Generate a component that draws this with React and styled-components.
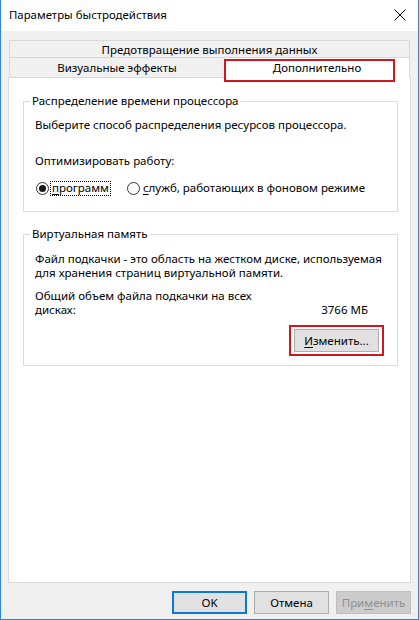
import React from "react";
import styled, { createGlobalStyle } from "styled-components";

const GlobalStyle = createGlobalStyle`
  html, body { margin: 0; padding: 0; background: #ffffff; }
  body { font-family: "Noto Sans", "Liberation Sans", sans-serif; font-size: 11.5px; color: #000; }
  * { box-sizing: border-box; }
`;

const Window = styled.div`
  width: 419px;
  height: 620px;
  display: flex;
  flex-direction: column;
  border: 1px solid #2b86d8;
  border-top: none;
  background: #f0f0f0;
`;

const TitleBar = styled.div`
  height: 31px;
  flex: none;
  background: #ffffff;
  display: flex;
  align-items: center;
  justify-content: space-between;
  padding: 0 12px 1px 8px;
`;

const Title = styled.span`
  font-size: 11.4px;
  line-height: 14px;
`;

const Client = styled.div`
  flex: 1;
  display: flex;
  flex-direction: column;
  padding: 9px 7px 0 7px;
  min-height: 0;
`;

const Tabs = styled.div`
  display: flex;
  flex-direction: column;
  padding: 0 1px;
  flex: none;
`;

const TabRow = styled.div`
  display: flex;
  height: ${(p) => p.$h}px;
`;

const Tab = styled.div`
  position: relative;
  flex: ${(p) => (p.$grow ? 1 : "none")};
  width: ${(p) => (p.$w ? `${p.$w}px` : "auto")};
  display: flex;
  justify-content: center;
  align-items: ${(p) => (p.$active ? "flex-start" : "center")};
  padding-top: ${(p) => (p.$active ? "3px" : "1px")};
  border: 1px solid #d9d9d9;
  border-bottom: none;
  border-right: ${(p) => (p.$noRight ? "none" : "1px solid #d9d9d9")};
  background: ${(p) => (p.$active ? "#ffffff" : "#f0f0f0")};
  margin-bottom: ${(p) => (p.$active ? "-1px" : "0")};
  z-index: ${(p) => (p.$active ? 1 : 0)};
  line-height: 14px;
  white-space: nowrap;
`;

const TabMark = styled.span`
  position: absolute;
  left: -1px;
  top: 1px;
  width: 171px;
  height: 23px;
  border: 2px solid #d2161e;
  pointer-events: none;
`;

const Panel = styled.div`
  flex: 1;
  background: #ffffff;
  border: 1px solid #d9d9d9;
  padding: 16px 12px 0 14px;
  display: flex;
  flex-direction: column;
  gap: 15px;
`;

const Group = styled.fieldset`
  margin: 0;
  min-width: 0;
  border: 1px solid #dcdcdc;
  padding: 0 11px ${(p) => p.$pb}px 11px;
  display: flex;
  flex-direction: column;
`;

const Legend = styled.legend`
  padding: 0 2px;
  margin-left: -5px;
  line-height: 14px;
`;

const Text = styled.div`
  line-height: 14px;
  white-space: nowrap;
  margin-top: ${(p) => p.$mt || 0}px;
`;

const RadioRow = styled.div`
  display: flex;
  align-items: center;
  margin-top: 13px;
  height: 14px;
  gap: 16px;
`;

const RadioItem = styled.label`
  display: flex;
  align-items: center;
  gap: 2px;
  line-height: 12px;
`;

const RadioCircle = styled.span`
  width: 13px;
  height: 13px;
  border-radius: 50%;
  border: 1px solid #333333;
  background: #ffffff;
  display: flex;
  align-items: center;
  justify-content: center;
  margin-left: 1px;
  &::after {
    content: "";
    width: 7px;
    height: 7px;
    border-radius: 50%;
    background: ${(p) => (p.$checked ? "#1a1a1a" : "transparent")};
  }
`;

const RadioLabel = styled.span`
  padding: 0 1px 1px 1px;
  outline: ${(p) => (p.$focus ? "1px dotted #000" : "none")};
  outline-offset: 0;
`;

const U = styled.span`
  text-decoration: underline;
  text-underline-offset: 2px;
`;

const SizeRow = styled.div`
  display: flex;
  justify-content: space-between;
  align-items: flex-end;
  margin-top: 9px;
  padding-right: 18px;
  line-height: 14px;
`;

const SizeLabel = styled.div`
  width: 225px;
`;

const ActionRow = styled.div`
  display: flex;
  justify-content: flex-end;
  margin-top: 8px;
  margin-right: 2px;
`;

const Mark = styled.span`
  display: inline-flex;
  border: 2px solid #d2161e;
  padding: 2px 3px;
`;

const Button = styled.button`
  font-family: inherit;
  font-size: 11.5px;
  width: ${(p) => p.$w || 75}px;
  height: 23px;
  padding: 0;
  margin: 0;
  background: ${(p) => (p.$disabled ? "#cccccc" : "#e1e1e1")};
  color: ${(p) => (p.$disabled ? "#8f8f8f" : "#000")};
  border: ${(p) =>
    p.$default ? "2px solid #0a78d5" : p.$disabled ? "1px solid #bfbfbf" : "1px solid #adadad"};
  line-height: 14px;
  border-radius: 0;
`;

const ButtonBar = styled.div`
  flex: none;
  display: flex;
  justify-content: flex-end;
  gap: 7px;
  padding: 8px 0 5px 0;
`;

const CloseIcon = () => (
  <svg width="12" height="12" viewBox="0 0 12 12">
    <path d="M0.5 0.5 L11.5 11.5 M11.5 0.5 L0.5 11.5" stroke="#000" strokeWidth="1" fill="none" />
  </svg>
);

export default function App() {
  return (
    <>
      <GlobalStyle />
      <Window>
        <TitleBar>
          <Title>Параметры быстродействия</Title>
          <CloseIcon />
        </TitleBar>
        <Client>
          <Tabs>
            <TabRow $h={17}>
              <Tab $grow>Предотвращение выполнения данных</Tab>
            </TabRow>
            <TabRow $h={20}>
              <Tab $w={215} $noRight>Визуальные эффекты</Tab>
              <Tab $grow $active>
                Дополнительно
                <TabMark />
              </Tab>
            </TabRow>
          </Tabs>
          <Panel>
            <Group $pb={16}>
              <Legend>Распределение времени процессора</Legend>
              <Text $mt={10}>Выберите способ распределения ресурсов процессора.</Text>
              <Text $mt={22}>Оптимизировать работу:</Text>
              <RadioRow>
                <RadioItem>
                  <RadioCircle $checked />
                  <RadioLabel $focus>
                    <U>п</U>рограмм
                  </RadioLabel>
                </RadioItem>
                <RadioItem>
                  <RadioCircle />
                  <RadioLabel>
                    <U>с</U>лужб, работающих в фоновом режиме
                  </RadioLabel>
                </RadioItem>
              </RadioRow>
            </Group>
            <Group $pb={9}>
              <Legend>Виртуальная память</Legend>
              <Text $mt={11}>
                Файл подкачки - это область на жестком диске, используемая
                <br />
                для хранения страниц виртуальной памяти.
              </Text>
              <SizeRow>
                <SizeLabel>Общий объем файла подкачки на всех дисках:</SizeLabel>
                <span>3766 МБ</span>
              </SizeRow>
              <ActionRow>
                <Mark>
                  <Button $w={85}>
                    <U>И</U>зменить...
                  </Button>
                </Mark>
              </ActionRow>
            </Group>
          </Panel>
          <ButtonBar>
            <Button $default>OK</Button>
            <Button>Отмена</Button>
            <Button $disabled>
              При<U>м</U>енить
            </Button>
          </ButtonBar>
        </Client>
      </Window>
    </>
  );
}
